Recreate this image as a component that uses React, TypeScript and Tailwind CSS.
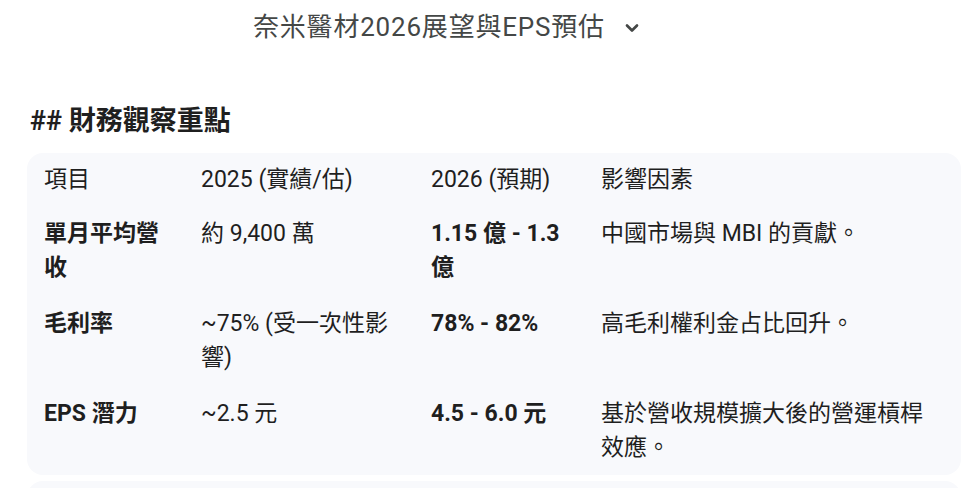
import React from "react";

const font = { fontFamily: 'Roboto, "Noto Sans CJK TC", sans-serif' };

type Row = { a: string; b: string; c: string; d: string };

const rows: Row[] = [
  { a: "單月平均營收", b: "約 9,400 萬", c: "1.15 億 - 1.3 億", d: "中國市場與 MBI 的貢獻。" },
  { a: "毛利率", b: "~75% (受一次性影響)", c: "78% - 82%", d: "高毛利權利金占比回升。" },
  { a: "EPS 潛力", b: "~2.5 元", c: "4.5 - 6.0 元", d: "基於營收規模擴大後的營運槓桿效應。" },
];

export default function App() {
  return (
    <div className="w-[971px] h-[488px] overflow-hidden bg-white text-[#1f1f1f]" style={font}>
      <div className="h-[54px] flex items-center pl-[253px] gap-[17px]">
        <span className="text-[26px] leading-[30px] tracking-[0.8px] text-[#444746]">奈米醫材2026展望與EPS預估</span>
        <svg width="20" height="20" viewBox="0 0 24 24" className="mt-[2px]">
          <path d="M6 9l6 6 6-6" fill="none" stroke="#444746" strokeWidth="3.2" strokeLinecap="round" strokeLinejoin="round" />
        </svg>
      </div>
      <div className="pl-[30px] pt-[50px]">
        <h2 className="text-[27px] leading-[34px] font-bold text-[#1f1f1f]">## 財務觀察重點</h2>
      </div>
      <div className="ml-[27px] mr-[10px] mt-[15px] rounded-[16px] bg-[#f8f9fc] px-[17px] pt-[10px] pb-[10px]">
        <div className="grid grid-cols-[157px_230px_170px_1fr] text-[23px] leading-[34px]">
          <div className="pb-[10px]">項目</div>
          <div className="pb-[10px]">2025 (實績/估)</div>
          <div className="pb-[10px]">2026 (預期)</div>
          <div className="pb-[10px]">影響因素</div>
          {rows.map((r, i) => (
            <React.Fragment key={i}>
              <div className={`font-bold pr-[24px] ${i === 0 ? "pt-[10px]" : "pt-[11px]"} ${i === 2 ? "" : "pb-[11px]"}`}>{r.a}</div>
              <div className={`pr-[25px] ${i === 0 ? "pt-[10px]" : "pt-[11px]"} ${i === 2 ? "" : "pb-[11px]"}`}>{r.b}</div>
              <div className={`font-bold pr-[24px] ${i === 0 ? "pt-[10px]" : "pt-[11px]"} ${i === 2 ? "" : "pb-[11px]"}`}>{r.c}</div>
              <div className={`${i === 0 ? "pt-[10px]" : "pt-[11px]"} ${i === 2 ? "" : "pb-[11px]"}`}>{r.d}</div>
            </React.Fragment>
          ))}
        </div>
      </div>
      <div className="ml-[27px] mr-[10px] mt-[6px] h-[40px] rounded-t-[16px] bg-[#f8f9fc]" />
    </div>
  );
}
